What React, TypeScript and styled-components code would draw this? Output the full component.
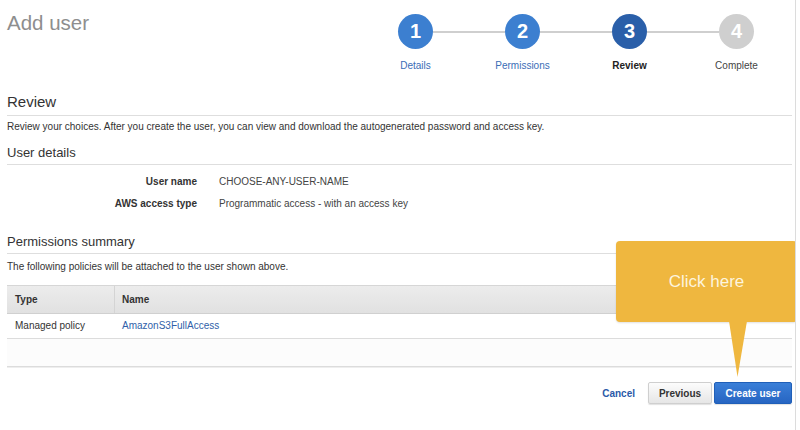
import React from "react";
import styled, { createGlobalStyle } from "styled-components";

const Global = createGlobalStyle`
  html, body { margin: 0; padding: 0; background: #fff; }
  body { font-family: "Liberation Sans", Arial, Helvetica, sans-serif; color: #333; }
  * { box-sizing: border-box; }
`;

const Page = styled.div`
  position: relative;
  width: 796px;
  height: 430px;
  border-right: 1px solid #dcdcdc;
  padding: 0 3px 0 7px;
  overflow: hidden;
`;

const Header = styled.header`
  height: 93px;
  display: flex;
  justify-content: space-between;
  align-items: flex-start;
`;

const Title = styled.h1`
  margin: 0;
  padding-top: 10px;
  font-size: 20.5px;
  line-height: 26px;
  font-weight: 400;
  color: #8e8e8e;
`;

const Stepper = styled.div`
  width: 428px;
  margin-right: 2px;
  padding-top: 14px;
`;

const StepTrack = styled.div`
  display: flex;
  align-items: center;
  padding-left: 36px;
`;

const Circle = styled.div<{ $tone: "done" | "active" | "todo" }>`
  width: 35px;
  height: 35px;
  border-radius: 50%;
  flex: none;
  display: flex;
  align-items: center;
  justify-content: center;
  color: #fff;
  font-weight: 700;
  font-size: 20px;
  background: ${(p) =>
    p.$tone === "done" ? "#3c7fd0" : p.$tone === "active" ? "#2a5fa9" : "#cfcfcf"};
`;

const Connector = styled.div`
  width: 72px;
  height: 2px;
  background: #cfcfcf;
  flex: none;
`;

const StepLabels = styled.div`
  display: grid;
  grid-template-columns: repeat(4, 107px);
  margin-top: 11px;
`;

const StepLabel = styled.div<{ $tone: "done" | "active" | "todo" }>`
  text-align: center;
  font-size: 10px;
  line-height: 12px;
  font-weight: ${(p) => (p.$tone === "active" ? 700 : 400)};
  color: ${(p) => (p.$tone === "done" ? "#3a6db6" : p.$tone === "active" ? "#222" : "#444")};
`;

const MainHeading = styled.h2`
  margin: 0;
  font-size: 15px;
  line-height: 18px;
  font-weight: 400;
  color: #333;
  padding-bottom: 4px;
  border-bottom: 1px solid #dedede;
`;

const SubHeading = styled.h3<{ $top: number }>`
  margin: ${(p) => p.$top}px 0 0;
  font-size: 13px;
  line-height: 16px;
  font-weight: 400;
  color: #333;
  padding-bottom: 3px;
  border-bottom: 1px solid #dedede;
`;

const Text = styled.p<{ $top: number }>`
  margin: ${(p) => p.$top}px 0 0;
  font-size: 10px;
  line-height: 12px;
  color: #333;
`;

const Details = styled.div`
  display: grid;
  grid-template-columns: 190px auto;
  column-gap: 22px;
  row-gap: 10px;
  margin-top: 11px;
  font-size: 10px;
  line-height: 12px;
`;

const DetailLabel = styled.div`
  text-align: right;
  font-weight: 700;
  color: #333;
`;

const DetailValue = styled.div`
  color: #444;
`;

const Table = styled.div`
  margin-top: 12px;
  font-size: 10px;
  line-height: 12px;
`;

const TableRow = styled.div<{ $head?: boolean }>`
  display: grid;
  grid-template-columns: 108px 1fr;
  height: ${(p) => (p.$head ? "29px" : "25px")};
  align-items: stretch;
  background: ${(p) => (p.$head ? "linear-gradient(#ececec, #e1e1e1)" : "#fff")};
  border-top: ${(p) => (p.$head ? "1px solid #d6d6d6" : "none")};
  border-bottom: 1px solid ${(p) => (p.$head ? "#d0d0d0" : "#dcdcdc")};
`;

const Cell = styled.div<{ $head?: boolean; $link?: boolean; $first?: boolean }>`
  display: flex;
  align-items: center;
  padding-left: ${(p) => (p.$first ? "8px" : "7px")};
  font-weight: ${(p) => (p.$head ? 700 : 400)};
  color: ${(p) => (p.$link ? "#2f5fa9" : "#333")};
  border-right: ${(p) => (p.$head && p.$first ? "1px solid #d4d4d4" : "none")};
`;

const TableEnd = styled.div`
  height: 28px;
  background: #fcfcfc;
  border-bottom: 1px solid #dcdcdc;
  box-shadow: 0 1px 0 #eeeeee;
`;

const Footer = styled.div`
  display: flex;
  justify-content: flex-end;
  align-items: center;
  margin-top: 15px;
`;

const LinkButton = styled.button`
  border: none;
  background: none;
  padding: 0;
  margin-right: 13px;
  font-family: inherit;
  font-size: 10px;
  font-weight: 700;
  color: #2a5aa8;
`;

const Button = styled.button<{ $primary?: boolean }>`
  height: 22px;
  width: ${(p) => (p.$primary ? "78px" : "64px")};
  margin-left: ${(p) => (p.$primary ? "2px" : "0")};
  border-radius: 2px;
  font-family: inherit;
  font-size: 10px;
  font-weight: 700;
  padding: 0;
  color: ${(p) => (p.$primary ? "#fff" : "#333")};
  border: 1px solid ${(p) => (p.$primary ? "#1f5fb8" : "#cfcfcf")};
  background: ${(p) =>
    p.$primary ? "linear-gradient(#3a7fd8, #2765c2)" : "linear-gradient(#fcfcfc, #e6e6e6)"};
  box-shadow: 0 1px 1px rgba(0, 0, 0, 0.12);
`;

const Callout = styled.div`
  position: absolute;
  left: 616px;
  top: 241px;
  width: 181px;
  height: 81px;
  border-radius: 4px;
  background: #efb73f;
  display: flex;
  align-items: center;
  justify-content: center;
  color: #fdf4dd;
  font-size: 17px;
  box-shadow: 0 1px 2px rgba(0, 0, 0, 0.12);
`;

const CalloutPointer = styled.svg`
  position: absolute;
  left: 729px;
  top: 321px;
`;

type Tone = "done" | "active" | "todo";
const steps: { n: number; label: string; tone: Tone }[] = [
  { n: 1, label: "Details", tone: "done" },
  { n: 2, label: "Permissions", tone: "done" },
  { n: 3, label: "Review", tone: "active" },
  { n: 4, label: "Complete", tone: "todo" },
];

export default function App() {
  return (
    <>
      <Global />
      <Page>
        <Header>
          <Title>Add user</Title>
          <Stepper>
            <StepTrack>
              {steps.map((s, i) => (
                <React.Fragment key={s.n}>
                  <Circle $tone={s.tone}>{s.n}</Circle>
                  {i < steps.length - 1 && <Connector />}
                </React.Fragment>
              ))}
            </StepTrack>
            <StepLabels>
              {steps.map((s) => (
                <StepLabel key={s.n} $tone={s.tone}>
                  {s.label}
                </StepLabel>
              ))}
            </StepLabels>
          </Stepper>
        </Header>

        <MainHeading>Review</MainHeading>
        <Text $top={5}>
          Review your choices. After you create the user, you can view and download the autogenerated
          password and access key.
        </Text>

        <SubHeading $top={12}>User details</SubHeading>
        <Details>
          <DetailLabel>User name</DetailLabel>
          <DetailValue>CHOOSE-ANY-USER-NAME</DetailValue>
          <DetailLabel>AWS access type</DetailLabel>
          <DetailValue>Programmatic access - with an access key</DetailValue>
        </Details>

        <SubHeading $top={24}>Permissions summary</SubHeading>
        <Text $top={7}>The following policies will be attached to the user shown above.</Text>

        <Table>
          <TableRow $head>
            <Cell $head $first>Type</Cell>
            <Cell $head>Name</Cell>
          </TableRow>
          <TableRow>
            <Cell $first>Managed policy</Cell>
            <Cell $link>AmazonS3FullAccess</Cell>
          </TableRow>
          <TableEnd />
        </Table>

        <Footer>
          <LinkButton>Cancel</LinkButton>
          <Button>Previous</Button>
          <Button $primary>Create user</Button>
        </Footer>

        <Callout>Click here</Callout>
        <CalloutPointer width="18" height="57" viewBox="0 0 18 57">
          <polygon points="0,0 18,0 8.5,56" fill="#efb73f" />
        </CalloutPointer>
      </Page>
    </>
  );
}
